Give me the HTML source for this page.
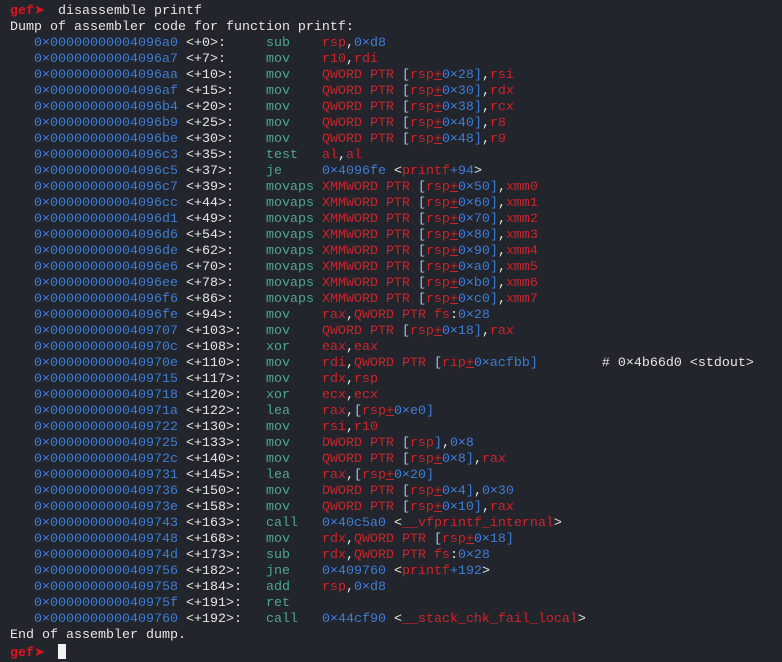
<!DOCTYPE html>
<html><head><meta charset="utf-8"><style>
html,body{margin:0;padding:0;background:#23252d;width:782px;height:662px;overflow:hidden}
#t{position:absolute;left:10px;top:3px;font-family:"Liberation Mono","DejaVu Sans Mono",monospace;font-size:13.33px;line-height:16px;color:#e6e6e6;white-space:pre}
.a,.b{color:#3c7dd6}.m{color:#4ea696}.r{color:#d42128}.p{color:#d42128;text-decoration:underline}.k{color:#b6bfd6}
.g{color:#e0141e;font-weight:bold}
.ar{font-family:"DejaVu Sans",sans-serif;font-size:13px;display:inline-block;width:8px}
.cur{display:inline-block;width:8px;height:15px;background:#f2f2f2;vertical-align:-3px}
</style></head><body><div id="t"><span class="g">gef<span class="ar">➤</span></span>  disassemble printf
Dump of assembler code for function printf:
   <span class="a">0×00000000004096a0</span> &lt;+0&gt;:     <span class="m">sub</span>    <span class="r">rsp</span>,<span class="b">0×d8</span>
   <span class="a">0×00000000004096a7</span> &lt;+7&gt;:     <span class="m">mov</span>    <span class="r">r10</span>,<span class="r">rdi</span>
   <span class="a">0×00000000004096aa</span> &lt;+10&gt;:    <span class="m">mov</span>    <span class="r">QWORD PTR </span><span class="k">[</span><span class="r">rsp</span><span class="p">+</span><span class="b">0×28]</span>,<span class="r">rsi</span>
   <span class="a">0×00000000004096af</span> &lt;+15&gt;:    <span class="m">mov</span>    <span class="r">QWORD PTR </span><span class="k">[</span><span class="r">rsp</span><span class="p">+</span><span class="b">0×30]</span>,<span class="r">rdx</span>
   <span class="a">0×00000000004096b4</span> &lt;+20&gt;:    <span class="m">mov</span>    <span class="r">QWORD PTR </span><span class="k">[</span><span class="r">rsp</span><span class="p">+</span><span class="b">0×38]</span>,<span class="r">rcx</span>
   <span class="a">0×00000000004096b9</span> &lt;+25&gt;:    <span class="m">mov</span>    <span class="r">QWORD PTR </span><span class="k">[</span><span class="r">rsp</span><span class="p">+</span><span class="b">0×40]</span>,<span class="r">r8</span>
   <span class="a">0×00000000004096be</span> &lt;+30&gt;:    <span class="m">mov</span>    <span class="r">QWORD PTR </span><span class="k">[</span><span class="r">rsp</span><span class="p">+</span><span class="b">0×48]</span>,<span class="r">r9</span>
   <span class="a">0×00000000004096c3</span> &lt;+35&gt;:    <span class="m">test</span>   <span class="r">al</span>,<span class="r">al</span>
   <span class="a">0×00000000004096c5</span> &lt;+37&gt;:    <span class="m">je</span>     <span class="b">0×4096fe</span> &lt;<span class="r">printf</span><span class="b">+94</span>&gt;
   <span class="a">0×00000000004096c7</span> &lt;+39&gt;:    <span class="m">movaps</span> <span class="r">XMMWORD PTR </span><span class="k">[</span><span class="r">rsp</span><span class="p">+</span><span class="b">0×50]</span>,<span class="r">xmm0</span>
   <span class="a">0×00000000004096cc</span> &lt;+44&gt;:    <span class="m">movaps</span> <span class="r">XMMWORD PTR </span><span class="k">[</span><span class="r">rsp</span><span class="p">+</span><span class="b">0×60]</span>,<span class="r">xmm1</span>
   <span class="a">0×00000000004096d1</span> &lt;+49&gt;:    <span class="m">movaps</span> <span class="r">XMMWORD PTR </span><span class="k">[</span><span class="r">rsp</span><span class="p">+</span><span class="b">0×70]</span>,<span class="r">xmm2</span>
   <span class="a">0×00000000004096d6</span> &lt;+54&gt;:    <span class="m">movaps</span> <span class="r">XMMWORD PTR </span><span class="k">[</span><span class="r">rsp</span><span class="p">+</span><span class="b">0×80]</span>,<span class="r">xmm3</span>
   <span class="a">0×00000000004096de</span> &lt;+62&gt;:    <span class="m">movaps</span> <span class="r">XMMWORD PTR </span><span class="k">[</span><span class="r">rsp</span><span class="p">+</span><span class="b">0×90]</span>,<span class="r">xmm4</span>
   <span class="a">0×00000000004096e6</span> &lt;+70&gt;:    <span class="m">movaps</span> <span class="r">XMMWORD PTR </span><span class="k">[</span><span class="r">rsp</span><span class="p">+</span><span class="b">0×a0]</span>,<span class="r">xmm5</span>
   <span class="a">0×00000000004096ee</span> &lt;+78&gt;:    <span class="m">movaps</span> <span class="r">XMMWORD PTR </span><span class="k">[</span><span class="r">rsp</span><span class="p">+</span><span class="b">0×b0]</span>,<span class="r">xmm6</span>
   <span class="a">0×00000000004096f6</span> &lt;+86&gt;:    <span class="m">movaps</span> <span class="r">XMMWORD PTR </span><span class="k">[</span><span class="r">rsp</span><span class="p">+</span><span class="b">0×c0]</span>,<span class="r">xmm7</span>
   <span class="a">0×00000000004096fe</span> &lt;+94&gt;:    <span class="m">mov</span>    <span class="r">rax</span>,<span class="r">QWORD PTR fs</span>:<span class="b">0×28</span>
   <span class="a">0×0000000000409707</span> &lt;+103&gt;:   <span class="m">mov</span>    <span class="r">QWORD PTR </span><span class="k">[</span><span class="r">rsp</span><span class="p">+</span><span class="b">0×18]</span>,<span class="r">rax</span>
   <span class="a">0×000000000040970c</span> &lt;+108&gt;:   <span class="m">xor</span>    <span class="r">eax</span>,<span class="r">eax</span>
   <span class="a">0×000000000040970e</span> &lt;+110&gt;:   <span class="m">mov</span>    <span class="r">rdi</span>,<span class="r">QWORD PTR </span><span class="k">[</span><span class="r">rip</span><span class="p">+</span><span class="b">0×acfbb]</span>        # 0×4b66d0 &lt;stdout&gt;
   <span class="a">0×0000000000409715</span> &lt;+117&gt;:   <span class="m">mov</span>    <span class="r">rdx</span>,<span class="r">rsp</span>
   <span class="a">0×0000000000409718</span> &lt;+120&gt;:   <span class="m">xor</span>    <span class="r">ecx</span>,<span class="r">ecx</span>
   <span class="a">0×000000000040971a</span> &lt;+122&gt;:   <span class="m">lea</span>    <span class="r">rax</span>,<span class="k">[</span><span class="r">rsp</span><span class="p">+</span><span class="b">0×e0]</span>
   <span class="a">0×0000000000409722</span> &lt;+130&gt;:   <span class="m">mov</span>    <span class="r">rsi</span>,<span class="r">r10</span>
   <span class="a">0×0000000000409725</span> &lt;+133&gt;:   <span class="m">mov</span>    <span class="r">DWORD PTR </span><span class="k">[</span><span class="r">rsp</span><span class="b">]</span>,<span class="b">0×8</span>
   <span class="a">0×000000000040972c</span> &lt;+140&gt;:   <span class="m">mov</span>    <span class="r">QWORD PTR </span><span class="k">[</span><span class="r">rsp</span><span class="p">+</span><span class="b">0×8]</span>,<span class="r">rax</span>
   <span class="a">0×0000000000409731</span> &lt;+145&gt;:   <span class="m">lea</span>    <span class="r">rax</span>,<span class="k">[</span><span class="r">rsp</span><span class="p">+</span><span class="b">0×20]</span>
   <span class="a">0×0000000000409736</span> &lt;+150&gt;:   <span class="m">mov</span>    <span class="r">DWORD PTR </span><span class="k">[</span><span class="r">rsp</span><span class="p">+</span><span class="b">0×4]</span>,<span class="b">0×30</span>
   <span class="a">0×000000000040973e</span> &lt;+158&gt;:   <span class="m">mov</span>    <span class="r">QWORD PTR </span><span class="k">[</span><span class="r">rsp</span><span class="p">+</span><span class="b">0×10]</span>,<span class="r">rax</span>
   <span class="a">0×0000000000409743</span> &lt;+163&gt;:   <span class="m">call</span>   <span class="b">0×40c5a0</span> &lt;<span class="r">__vfprintf_internal</span>&gt;
   <span class="a">0×0000000000409748</span> &lt;+168&gt;:   <span class="m">mov</span>    <span class="r">rdx</span>,<span class="r">QWORD PTR </span><span class="k">[</span><span class="r">rsp</span><span class="p">+</span><span class="b">0×18]</span>
   <span class="a">0×000000000040974d</span> &lt;+173&gt;:   <span class="m">sub</span>    <span class="r">rdx</span>,<span class="r">QWORD PTR fs</span>:<span class="b">0×28</span>
   <span class="a">0×0000000000409756</span> &lt;+182&gt;:   <span class="m">jne</span>    <span class="b">0×409760</span> &lt;<span class="r">printf</span><span class="b">+192</span>&gt;
   <span class="a">0×0000000000409758</span> &lt;+184&gt;:   <span class="m">add</span>    <span class="r">rsp</span>,<span class="b">0×d8</span>
   <span class="a">0×000000000040975f</span> &lt;+191&gt;:   <span class="m">ret</span>
   <span class="a">0×0000000000409760</span> &lt;+192&gt;:   <span class="m">call</span>   <span class="b">0×44cf90</span> &lt;<span class="r">__stack_chk_fail_local</span>&gt;
End of assembler dump.
<span class="g">gef<span class="ar">➤</span></span>  <span class="cur"></span></div></body></html>
